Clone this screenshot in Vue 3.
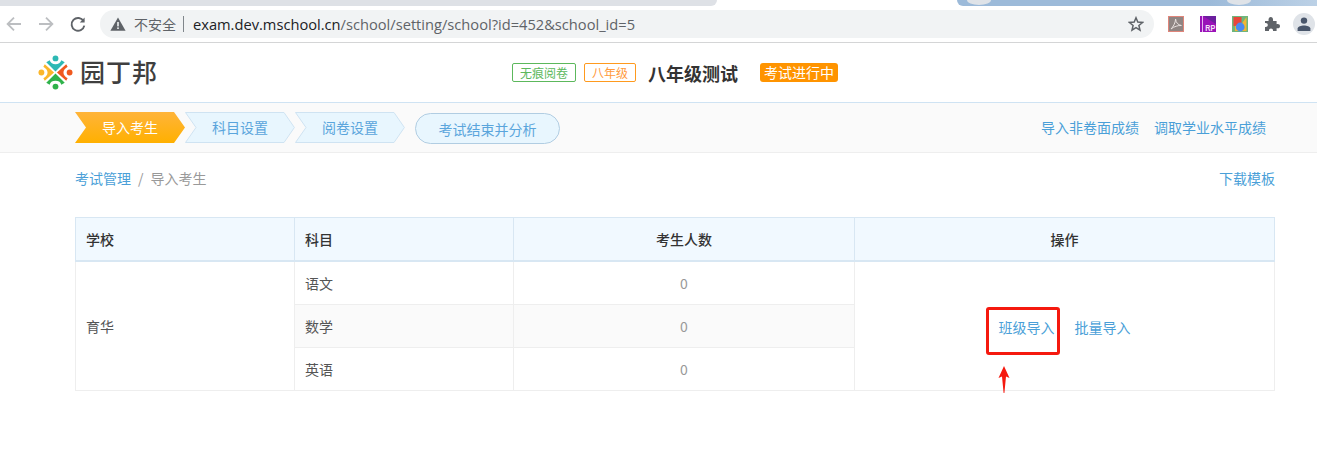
<script setup>
const subjects = [
  { name: '语文', count: 0 },
  { name: '数学', count: 0 },
  { name: '英语', count: 0 },
]
const steps = [
  { label: '导入考生', active: true },
  { label: '科目设置', active: false },
  { label: '阅卷设置', active: false },
]
</script>

<template>
  <div class="page">
    <div class="tabstrip">
      <div class="tab-left"></div>
      <div class="tab-white"></div>
      <div class="tab-blue">
        <i class="blob b1"></i>
        <i class="blob b2"></i>
      </div>
    </div>

    <div class="toolbar">
      <svg class="nav" width="18" height="18" viewBox="0 0 18 18" fill="none" stroke="#bcbec1" stroke-width="1.8"><path d="M16 9H3M9 2.6L2.6 9L9 15.4"/></svg>
      <svg class="nav" width="18" height="18" viewBox="0 0 18 18" fill="none" stroke="#bcbec1" stroke-width="1.8"><path d="M2 9H15M9 2.6L15.4 9L9 15.4"/></svg>
      <svg class="nav" width="18" height="18" viewBox="0 0 18 18" fill="none" stroke="#5f6368" stroke-width="1.9"><path d="M14.6 6.2A6.4 6.4 0 1 0 15.3 10.6"/><path d="M15.6 2.6V7.4H10.8" fill="#5f6368" stroke="none"/></svg>
      <div class="omnibox">
        <svg class="warn" width="16" height="14" viewBox="0 0 16 14"><path d="M8 0.5L15.6 13.7H0.4Z" fill="#5f6368"/><rect x="7.2" y="5" width="1.6" height="4.4" fill="#f1f3f4"/><rect x="7.2" y="10.4" width="1.6" height="1.6" fill="#f1f3f4"/></svg>
        <span class="insecure">不安全</span>
        <span class="sep"></span>
        <span class="url"><b>exam.dev.mschool.cn</b>/school/setting/school?id=452&amp;school_id=5</span>
        <svg class="star" width="16" height="16" viewBox="0 0 16 16" fill="none" stroke="#5f6368" stroke-width="1.5"><path d="M8 1.8L9.8 6.1L14.5 6.5L10.9 9.5L12 14.1L8 11.7L4 14.1L5.1 9.5L1.5 6.5L6.2 6.1Z"/></svg>
      </div>
      <div class="exts">
        <svg width="16" height="16" viewBox="0 0 16 16"><rect x="0.5" y="0.5" width="15" height="15" fill="#8f8583" stroke="#e0857a"/><path d="M3 13C5 11 7.5 7 7.6 3C7.8 6.5 10 9 13.4 9.5C10 9.3 6 10.5 3 13Z" fill="none" stroke="#e8e0de" stroke-width="1"/></svg>
        <svg width="16" height="16" viewBox="0 0 16 16"><rect width="16" height="16" fill="#9a12b8"/><rect x="2" width="1" height="16" fill="#e6b6f0"/><path d="M3 0H16V8Z" fill="#6b1f9e"/><text x="5.2" y="14.5" font-size="8.5" font-weight="700" fill="#f4e0f8" font-family="Liberation Sans, sans-serif" textLength="10" lengthAdjust="spacingAndGlyphs">RP</text></svg>
        <svg width="16" height="16" viewBox="0 0 16 16"><rect width="16" height="16" fill="#6fb57c"/><rect x="1.5" y="1" width="8" height="9" fill="#e8453c"/><path d="M9.5 8L14.5 1V15H3V10Z" fill="#f2b632"/><circle cx="8.2" cy="11" r="4.4" fill="#4a8af0"/></svg>
        <svg class="puzzle" width="16" height="16" viewBox="0 0 16 16"><path d="M1 5H4.6C4.2 2.6 5.2 1 6.8 1S9.4 2.6 9 5H12.6V8.2C15 7.8 16 8.8 16 10.2S15 12.6 12.6 12.2V15H9C9.2 13.4 8.4 12.4 7 12.4S4.8 13.4 5 15H1V11C3 11.2 3.8 10.2 3.8 9S3 6.8 1 7Z" fill="#5f6368"/></svg>
        <div class="avatar">
          <svg width="14" height="14" viewBox="0 0 14 14"><circle cx="7" cy="3.6" r="3.2" fill="#49566b"/><path d="M0.6 14V11.6C0.6 9.4 4.2 8.4 7 8.4S13.4 9.4 13.4 11.6V14Z" fill="#49566b"/></svg>
        </div>
      </div>
    </div>

    <header class="head">
      <div class="logo">
        <svg width="35" height="35" viewBox="0 0 36 36">
          <circle cx="18" cy="3.5" r="3" fill="#2db9b4"/>
          <circle cx="18" cy="32.5" r="3" fill="#2fb24a"/>
          <circle cx="3.5" cy="18" r="3" fill="#fbb62a"/>
          <circle cx="32.5" cy="18" r="3" fill="#f0591e"/>
          <path d="M8.5 7.5L12 5.5C13 8.5 15 9.5 18 9.5S23 8.5 24 5.5L27.5 7.5L18 17Z" fill="#2db9b4"/>
          <path d="M8.5 28.5L12 30.5C13 27.5 15 26.5 18 26.5S23 27.5 24 30.5L27.5 28.5L18 19Z" fill="#2fb24a"/>
          <path d="M7 9.5L16.5 18L7 26.5L5.5 24C8.5 22 9.8 20.5 9.8 18S8.5 14 5.5 12Z" fill="#fbb62a"/>
          <path d="M29 9.5L19.5 18L29 26.5L30.5 24C27.5 22 26.2 20.5 26.2 18S27.5 14 30.5 12Z" fill="#f0591e"/>
        </svg>
        <span class="logo-text">园丁邦</span>
      </div>
      <div class="exam">
        <span class="tag green">无痕阅卷</span>
        <span class="tag orange">八年级</span>
        <span class="title">八年级测试</span>
        <span class="status">考试进行中</span>
      </div>
    </header>

    <nav class="stepbar">
      <div class="steps">
        <div v-for="s in steps" :key="s.label" class="step" :class="{ active: s.active }">
          <svg class="step-bg" width="110" height="31" viewBox="0 0 110 31">
            <path v-if="s.active" d="M0 0H99L110 15.5L99 31H0L11 15.5Z" fill="url(#stepGrad)"/>
            <path v-else d="M0.5 0.5H99L109.4 15.5L99 30.5H0.5L11 15.5Z" fill="#e8f6fe" stroke="#cfe3f2"/>
            <defs>
              <linearGradient id="stepGrad" x1="0" y1="0" x2="0" y2="1">
                <stop offset="0" stop-color="#ffb43a"/>
                <stop offset="1" stop-color="#ffb000"/>
              </linearGradient>
            </defs>
          </svg>
          <span class="step-label">{{ s.label }}</span>
        </div>
        <button class="finish">考试结束并分析</button>
      </div>
      <div class="side-links">
        <a>导入非卷面成绩</a>
        <a>调取学业水平成绩</a>
      </div>
    </nav>

    <main class="content">
      <div class="crumbs">
        <div>
          <a>考试管理</a>
          <span class="slash">/</span>
          <span class="current">导入考生</span>
        </div>
        <a>下载模板</a>
      </div>

      <table class="grid">
        <colgroup>
          <col class="c1" />
          <col class="c2" />
          <col class="c3" />
          <col class="c4" />
        </colgroup>
        <thead>
          <tr>
            <th>学校</th>
            <th>科目</th>
            <th class="center">考生人数</th>
            <th class="center">操作</th>
          </tr>
        </thead>
        <tbody>
          <tr v-for="(row, i) in subjects" :key="row.name" :class="{ odd: i === 1 }">
            <td v-if="i === 0" rowspan="3" class="plain">育华</td>
            <td>{{ row.name }}</td>
            <td class="center num">{{ row.count }}</td>
            <td v-if="i === 0" rowspan="3" class="center plain actions">
              <a class="act">班级导入</a>
              <a class="act">批量导入</a>
              <span class="redbox"></span>
              <svg class="redarrow" width="12" height="27" viewBox="0 0 12 27"><path d="M6 0L11.5 12L8 10.5L6.4 27H5.6L4 10.5L0.5 12Z" fill="#f5190f"/></svg>
            </td>
          </tr>
        </tbody>
      </table>
    </main>
  </div>
</template>

<style scoped>
.page {
  width: 1317px;
  height: 454px;
  overflow: hidden;
  background: #fff;
  font-family: "Noto Sans CJK SC", "Liberation Sans", sans-serif;
  font-size: 14px;
  color: #333;
}
a { color: #4a9fd8; text-decoration: none; }

.tabstrip { display: flex; height: 6px; }
.tab-left { width: 717px; background: #dee1e6; border-bottom-right-radius: 6px; }
.tab-white { width: 240px; background: #fff; }
.tab-blue {
  flex: 1;
  display: flex;
  background: linear-gradient(90deg, #9cbad9 0%, #9cbad9 70%, #bcd1e6 100%);
  border-bottom-left-radius: 6px;
  overflow: hidden;
}
.blob { display: block; width: 24px; height: 10px; border-radius: 50%; background: #dfe3e8; margin-top: -5px; }
.b1 { margin-left: 10px; }
.b2 { margin-left: 236px; }

.toolbar {
  display: flex;
  align-items: center;
  height: 36px;
  padding: 0 0 0 5px;
  box-sizing: content-box;
  border-bottom: 1px solid #d4d5d6;
  background: #fff;
}
.nav { flex: none; margin-right: 14px; }
.nav:nth-child(3) { margin-right: 13px; }
.omnibox {
  flex: none;
  display: flex;
  align-items: center;
  width: 1054px;
  height: 28px;
  box-sizing: border-box;
  padding: 0 10px 0 10px;
  border-radius: 14px;
  background: #f1f3f4;
}
.insecure { margin-left: 8px; font-size: 14px; color: #5f6368; }
.sep { width: 1px; height: 16px; margin: 0 9px 0 7px; background: #80868b; }
.url { flex: 1; font-family: "Open Sans", sans-serif; font-size: 14.66px; color: #5f6368; white-space: nowrap; }
.url b { font-weight: 400; color: #202124; }
.star { flex: none; }
.exts { flex: 1; display: flex; align-items: center; padding-left: 14px; }
.exts > svg { margin-right: 16px; flex: none; }
.exts > .puzzle { margin-right: 13px; }
.avatar {
  width: 22px;
  height: 22px;
  border-radius: 50%;
  background: #dfe3e8;
  display: flex;
  align-items: flex-end;
  justify-content: center;
  padding-bottom: 4px;
  box-sizing: border-box;
}

.head {
  position: relative;
  display: flex;
  align-items: center;
  height: 59px;
  padding-left: 38px;
}
.logo { display: flex; align-items: center; gap: 7px; }
.logo-text { font-size: 25px; font-weight: 500; letter-spacing: 1px; color: #3f3f3f; line-height: 28px; margin-top: -3px; }
.exam {
  display: flex;
  align-items: center;
  margin-left: 354px;
}
.tag {
  font-size: 12px;
  line-height: 17px;
  border: 1px solid;
  border-radius: 2px;
  padding: 0 7px;
  margin-right: 8px;
}
.tag.green { color: #5cb85c; border-color: #5cb85c; }
.tag.orange { color: #ff9a3c; border-color: #ff9a1e; margin-right: 12px; }
.title { font-size: 18px; font-weight: 700; color: #333; margin-right: 22px; }
.status {
  font-size: 14px;
  line-height: 19px;
  color: #fff;
  background: #ff9400;
  border-radius: 3px;
  padding: 0 4px;
}

.stepbar {
  display: flex;
  align-items: center;
  justify-content: space-between;
  height: 51px;
  box-sizing: border-box;
  padding: 0 51px 0 75px;
  background: #fafafa;
  border-top: 1px solid #cfe3f3;
  border-bottom: 1px solid #eeeeee;
}
.steps { display: flex; align-items: center; }
.step {
  position: relative;
  width: 110px;
  height: 31px;
  display: flex;
  align-items: center;
  justify-content: center;
  color: #5aa5dc;
}
.step.active { color: #fff; }
.step-bg { position: absolute; left: 0; top: 0; }
.step-label { position: relative; margin-top: -2px; }
.finish {
  margin: 2px 0 0 10px;
  width: 145px;
  height: 31px;
  padding: 1px 0 0;
  border: 1px solid #b1cde2;
  border-radius: 16px;
  background: #e8f6fe;
  color: #5aa5dc;
  font: inherit;
}
.side-links { display: flex; gap: 15px; margin-top: -2px; }

.content { padding: 0 42px 0 75px; }
.crumbs {
  display: flex;
  justify-content: space-between;
  align-items: center;
  height: 20px;
  margin: 15px 0 29px;
  font-size: 14px;
}
.slash { margin: 0 7px; color: #999; }
.current { color: #999; }

.grid {
  width: 1199px;
  border-collapse: collapse;
  table-layout: fixed;
  font-size: 14px;
}
.c1, .c2 { width: 219px; }
.c3 { width: 341px; }
.c4 { width: 420px; }
th {
  height: 42px;
  padding: 0 10px;
  background: #f1f9ff;
  border: 1px solid #d8e7f3;
  border-bottom-width: 2px;
  text-align: left;
  font-weight: 500;
  color: #333;
}
td {
  height: 43px;
  padding: 0 10px;
  box-sizing: border-box;
  border: 1px solid #eeeeee;
  color: #555;
  background: #fff;
}
tr.odd td { background: #fafafa; }
td.plain { background: #fff !important; }
.center { text-align: center; }
.num { color: #999; }
.actions { position: relative; padding-top: 2px; }
.act { margin: 0 10px; }
.redbox {
  position: absolute;
  left: 131px;
  top: 45px;
  width: 74px;
  height: 48px;
  box-sizing: border-box;
  border: 3px solid #f5190f;
  border-radius: 3px;
}
.redarrow { position: absolute; left: 143px; top: 104px; }
</style>
